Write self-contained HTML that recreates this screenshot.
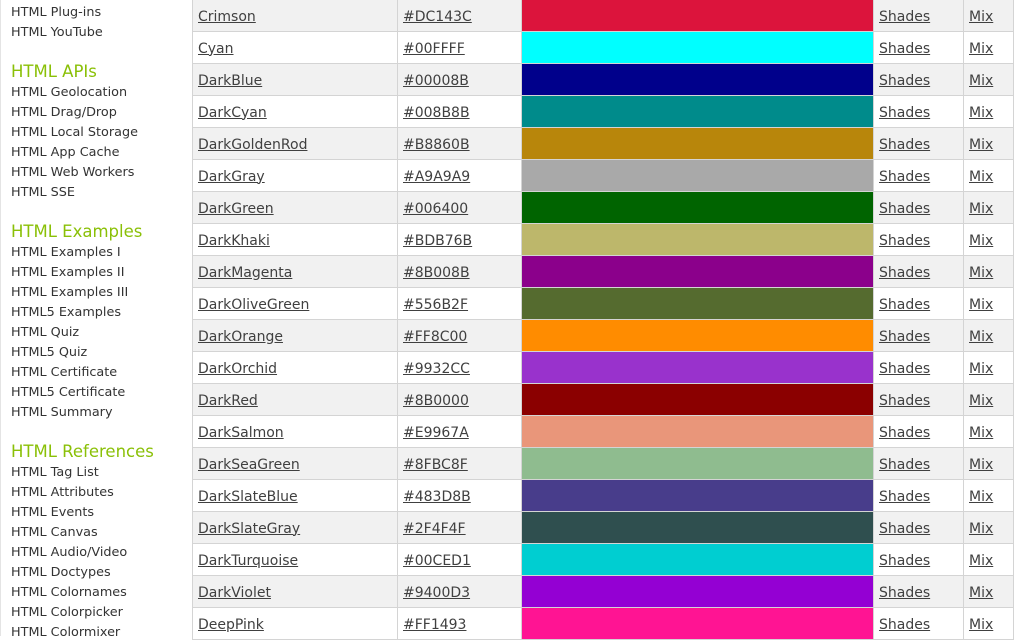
<!DOCTYPE html>
<html><head><meta charset="utf-8"><style>
html,body{margin:0;padding:0;width:1021px;height:636px;overflow:hidden;background:#fff;font-family:"DejaVu Sans",Verdana,sans-serif;}
#side{position:absolute;left:0;top:0;width:190px;border-left:1px solid #e4e4e4;height:636px;}
#side a{display:block;height:20px;line-height:20px;padding-left:10px;font-size:12.8px;color:#333;text-decoration:none;white-space:nowrap;}
#side h2{margin:18px 0 0 0;height:22px;line-height:22px;padding-left:10px;font-size:16.5px;font-weight:normal;color:#8AC007;}
table{position:absolute;left:192px;top:-1px;border-collapse:collapse;font-size:14px;}
td{border:1px solid #d4d4d4;height:31px;padding:2px 0 0 5px;box-sizing:border-box;white-space:nowrap;}
tr:nth-child(odd) td{background:#f1f1f1}
td a{color:#404040;text-decoration:underline;}
td.c{padding:0}
</style></head><body>
<div id="side">
<a style="margin-top:3px">HTML Plug-ins</a><a>HTML YouTube</a>
<h2>HTML APIs</h2>
<a>HTML Geolocation</a><a>HTML Drag/Drop</a><a>HTML Local Storage</a><a>HTML App Cache</a><a>HTML Web Workers</a><a>HTML SSE</a>
<h2>HTML Examples</h2>
<a>HTML Examples I</a><a>HTML Examples II</a><a>HTML Examples III</a><a>HTML5 Examples</a><a>HTML Quiz</a><a>HTML5 Quiz</a><a>HTML Certificate</a><a>HTML5 Certificate</a><a>HTML Summary</a>
<h2>HTML References</h2>
<a>HTML Tag List</a><a>HTML Attributes</a><a>HTML Events</a><a>HTML Canvas</a><a>HTML Audio/Video</a><a>HTML Doctypes</a><a>HTML Colornames</a><a>HTML Colorpicker</a><a>HTML Colormixer</a>
</div>
<table id="t"></table>
<script>
var d=[["Crimson","DC143C"],["Cyan","00FFFF"],["DarkBlue","00008B"],["DarkCyan","008B8B"],["DarkGoldenRod","B8860B"],["DarkGray","A9A9A9"],["DarkGreen","006400"],["DarkKhaki","BDB76B"],["DarkMagenta","8B008B"],["DarkOliveGreen","556B2F"],["DarkOrange","FF8C00"],["DarkOrchid","9932CC"],["DarkRed","8B0000"],["DarkSalmon","E9967A"],["DarkSeaGreen","8FBC8F"],["DarkSlateBlue","483D8B"],["DarkSlateGray","2F4F4F"],["DarkTurquoise","00CED1"],["DarkViolet","9400D3"],["DeepPink","FF1493"]];
var h="";d.forEach(function(r){h+='<tr style="height:32px"><td style="width:205px"><a>'+r[0]+'</a></td><td style="width:124px"><a>#'+r[1]+'</a></td><td class="c" style="width:352px;background:#'+r[1]+'"></td><td style="width:90px"><a>Shades</a></td><td style="width:50px"><a>Mix</a></td></tr>';});
document.getElementById("t").innerHTML=h;
</script>
</body></html>
